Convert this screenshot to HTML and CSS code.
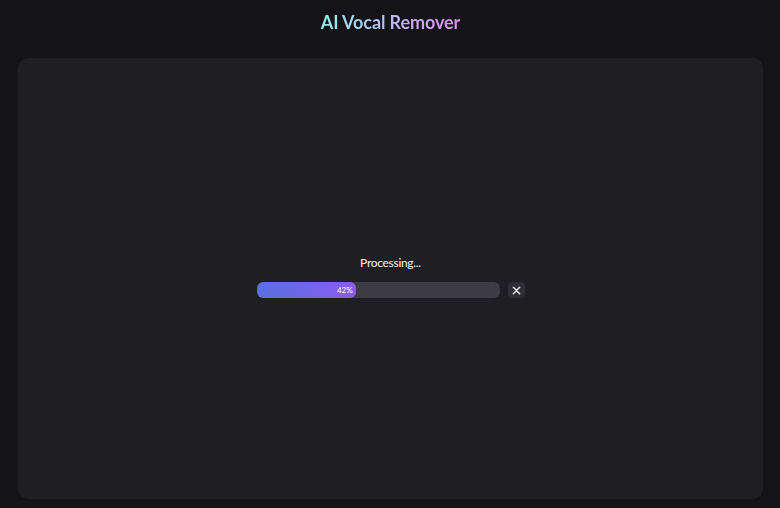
FILE: index.html
```html
<!DOCTYPE html>
<html>
<head>
<meta charset="utf-8">
<link rel="stylesheet" href="styles.css">
</head>
<body>
<header class="header">
  <h1 class="title">AI Vocal Remover</h1>
</header>
<main class="card">
  <div class="processing">
    <div class="label">Processing...</div>
    <div class="row">
      <div class="track">
        <div class="fill" style="width:40.8%"><span class="pct">42%</span></div>
      </div>
      <button class="close" aria-label="Cancel">
        <svg width="9" height="9" viewBox="0 0 10 10"><path d="M1.5 1.5 L8.5 8.5 M8.5 1.5 L1.5 8.5" stroke="#e6e6ea" stroke-width="1.6" stroke-linecap="round"/></svg>
      </button>
    </div>
  </div>
</main>
</body>
</html>
```
FILE: styles.css
```css
* { box-sizing: border-box; }
html, body { margin: 0; height: 100%; }
body {
  background: #141318;
  font-family: Lato, "Noto Sans", sans-serif;
  color: #f2f2f4;
  display: flex;
  flex-direction: column;
  padding: 0 17px 9px 18px;
}
.header {
  height: 58px;
  display: flex;
  justify-content: center;
  padding-top: 10px;
}
.title {
  margin: 0;
  font-size: 18px;
  font-weight: 700;
  line-height: 24px;
  letter-spacing: -0.1px;
  background: linear-gradient(90deg, #8ef0ec 0%, #b9b8f0 50%, #e48cf0 100%);
  -webkit-background-clip: text;
  background-clip: text;
  color: transparent;
}
.card {
  flex: 1;
  background: #1f1e23;
  border-radius: 10px;
  display: flex;
  align-items: center;
  justify-content: center;
}
.processing {
  display: flex;
  flex-direction: column;
  align-items: center;
  gap: 11px;
  margin-top: -4px;
}
.label {
  font-size: 12px;
  line-height: 16px;
  letter-spacing: -0.3px;
  color: #f4f4f6;
}
.row {
  display: flex;
  align-items: center;
  gap: 8px;
}
.track {
  width: 243px;
  height: 16px;
  background: #3d3c42;
  border-radius: 6px;
  overflow: hidden;
}
.fill {
  height: 100%;
  background: linear-gradient(90deg, #5a6fe0 0%, #8a5cf0 100%);
  border-radius: 6px;
  display: flex;
  align-items: center;
  justify-content: flex-end;
  padding-right: 3px;
}
.pct {
  font-size: 8px;
  color: #fff;
  line-height: 1;
}
.close {
  width: 17px;
  height: 16px;
  border: 0;
  padding: 0;
  background: #2f2e34;
  border-radius: 4px;
  display: flex;
  align-items: center;
  justify-content: center;
}
```
